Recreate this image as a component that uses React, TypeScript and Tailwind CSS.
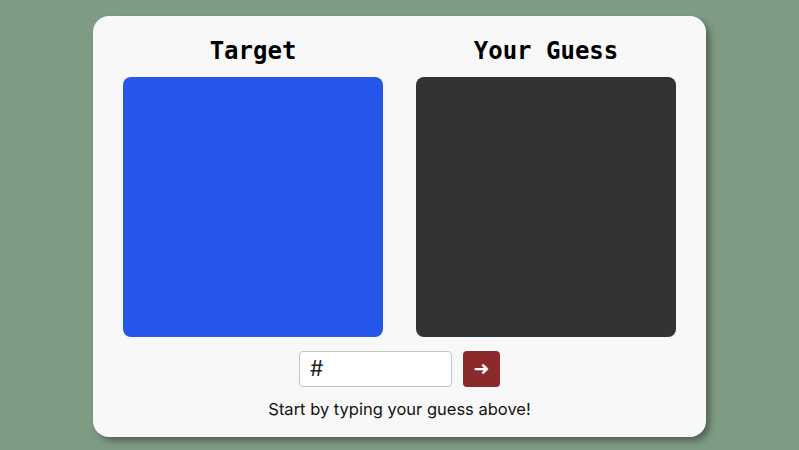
import React from "react";

export default function App() {
  return (
    <div className="min-h-screen w-full bg-[#7f9b83] flex items-center justify-center pt-[2px]" style={{ fontFamily: "Inter, 'Noto Sans', sans-serif" }}>
      <div className="w-[613px] bg-[#f8f8f8] rounded-[16px] shadow-[4px_4px_6px_rgba(0,0,0,0.35)] px-[30px] pt-[19px] pb-[16px] flex flex-col items-center">
        <div className="grid grid-cols-2 gap-[33px]">
          <div className="flex flex-col items-center">
            <h2 className="text-[24px] leading-[32px] font-bold text-black mb-[10px]" style={{ fontFamily: "'DejaVu Sans Mono', 'Liberation Mono', monospace" }}>Target</h2>
            <div className="w-[260px] h-[260px] rounded-[8px] bg-[#2557eb]" />
          </div>
          <div className="flex flex-col items-center">
            <h2 className="text-[24px] leading-[32px] font-bold text-black mb-[10px]" style={{ fontFamily: "'DejaVu Sans Mono', 'Liberation Mono', monospace" }}>Your Guess</h2>
            <div className="w-[260px] h-[260px] rounded-[8px] bg-[#333333]" />
          </div>
        </div>
        <div className="mt-[14px] flex items-center gap-[11px]">
          <input
            defaultValue="#"
            className="w-[153px] h-[36px] rounded-[4px] border border-[#c4c4c4] bg-white pl-[10px] text-[21px] text-[#222] outline-none"
            style={{ fontFamily: "Inter, 'Noto Sans', sans-serif" }}
          />
          <button className="w-[37px] h-[36px] rounded-[4px] bg-[#8b2a2a] text-white text-[19px] font-bold flex items-center justify-center" style={{ fontFamily: "'DejaVu Sans', sans-serif" }}>
            ➜
          </button>
        </div>
        <p className="mt-[10px] text-[16.5px] leading-[24px] text-[#111]">Start by typing your guess above!</p>
      </div>
    </div>
  );
}
